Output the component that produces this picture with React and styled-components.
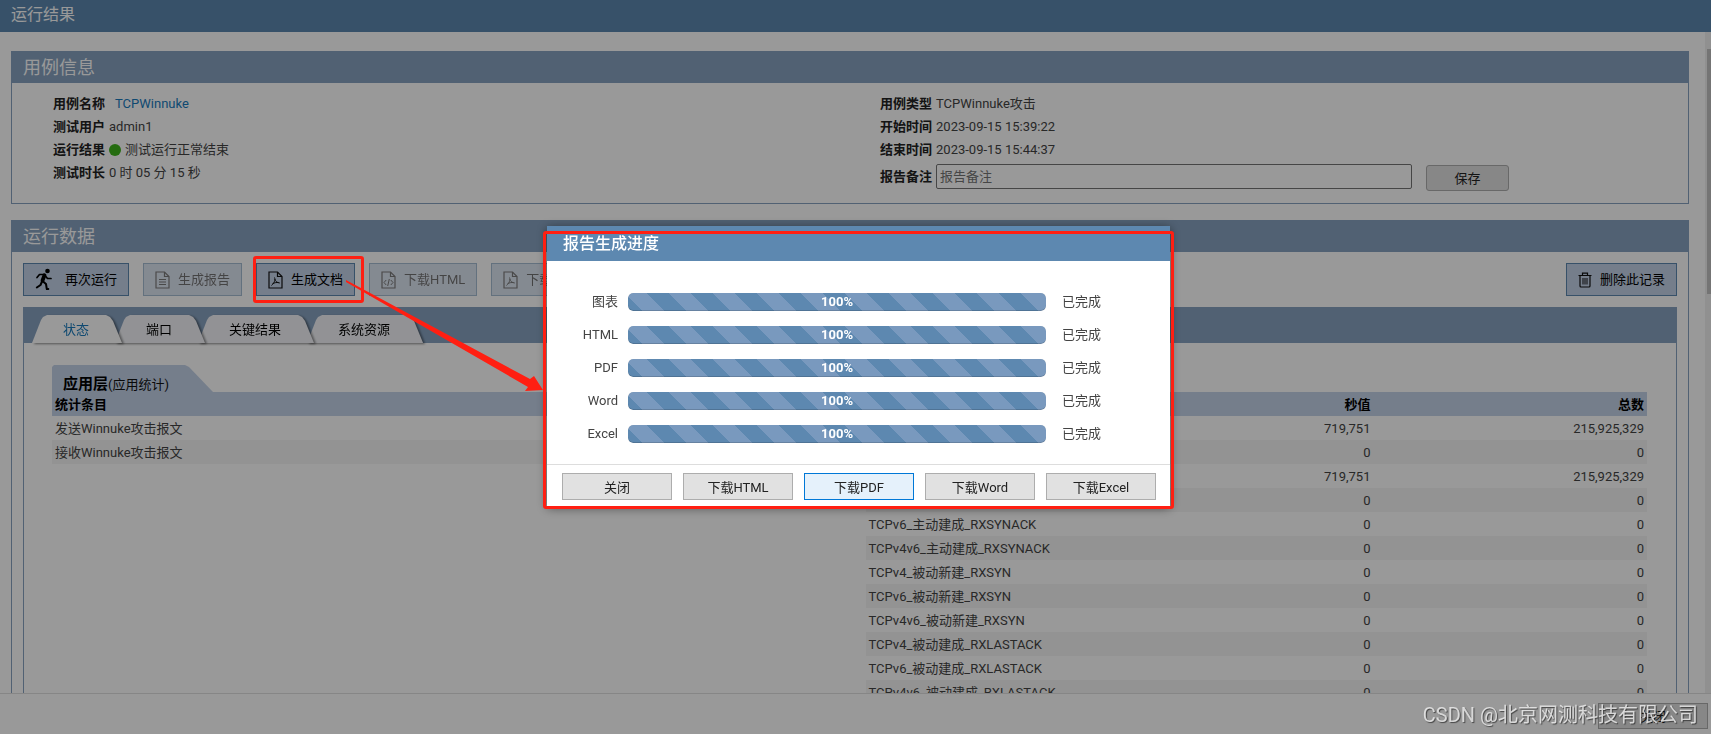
import React from "react";
import styled, { createGlobalStyle } from "styled-components";

const blue = "#5d88b0";
const steel = "#87a2c0";
const pale = "#c3d2e8";
const red = "#ff1f12";

const Global = createGlobalStyle`
  *, *::before, *::after { box-sizing: border-box; }
  body {
    margin: 0;
    background: #fff;
    color: #444;
    font: 13px/24px Roboto, "Noto Sans CJK SC", sans-serif;
  }
  button, input { font: inherit; }
`;

const Page = styled.div`
  height: 100vh;
  display: flex;
  flex-direction: column;
`;

const TitleBar = styled.h1`
  flex: none;
  margin: 0;
  padding: 0 11px;
  background: ${blue};
  color: #fff;
  font-size: 16px;
  font-weight: 400;
  line-height: 30px;
  height: 32px;
`;

const Middle = styled.div`
  flex: 1;
  min-height: 0;
  display: flex;
`;

const Content = styled.main`
  flex: 1;
  min-width: 0;
  overflow: hidden;
  padding: 19px 16px 0 11px;
`;

const ScrollTrack = styled.div`
  flex: none;
  width: 6px;
  padding: 17px 0 0 2px;
  background: #f0f0f0;
`;

const ScrollThumb = styled.div`
  height: 245px;
  background: #c1c1c1;
`;

const Footer = styled.footer`
  flex: none;
  height: 41px;
  padding: 9px 3px 0;
  border-top: 1px solid #e0e0e0;
  display: flex;
  justify-content: flex-end;
`;

const Panel = styled.section`
  border: 1px solid ${steel};
  border-top: 0;
  margin-bottom: 16px;
`;

const PanelTitle = styled.h2`
  height: 32px;
  margin: 0 -1px;
  padding: 0 12px;
  background: ${steel};
  color: #fff;
  font-size: 18px;
  font-weight: 400;
  line-height: 34px;
`;

const InfoGrid = styled.div`
  display: grid;
  grid-template-columns: 1fr 1fr;
  padding: 8px 11px 0;
  height: 120px;
  line-height: 23px;
`;

const InfoColumn = styled.div`
  padding: 1px 0 0 30px;
`;

const InfoRow = styled.div`
  display: flex;
  align-items: center;
  gap: 4px;
  min-height: 23px;
`;

const InfoLabel = styled.label`
  color: #222;
  font-weight: 700;
`;

const CaseLink = styled.a`
  margin-left: 6px;
  color: #1a7bbd;
  text-decoration: none;
`;

const StatusDot = styled.span`
  width: 12px;
  height: 12px;
  border-radius: 50%;
  background: #3fb51c;
`;

const NoteInput = styled.input`
  width: 476px;
  height: 25px;
  padding: 0 3px;
  border: 1px solid #767676;
  border-radius: 2px;
  &::placeholder { color: #757575; opacity: 1; }
`;

const PlainButton = styled.button`
  width: ${(p) => p.$width || 110}px;
  height: ${(p) => p.$height || 27}px;
  flex: none;
  padding: 2px 0 0;
  border: 1px solid ${(p) => (p.$active ? "#0078d7" : "#adadad")};
  border-radius: ${(p) => p.$radius || 0}px;
  background: ${(p) => (p.$active ? "#e5f1fb" : "#e1e1e1")};
  color: #222;
  line-height: 22px;
`;

const SaveButton = styled(PlainButton)`
  margin: 4px 0 0 10px;
`;

const Toolbar = styled.div`
  display: flex;
  gap: 14px;
  padding: 11px;
`;

const ToolButton = styled.button`
  position: relative;
  display: flex;
  align-items: center;
  gap: 8px;
  height: 33px;
  padding: 0 11px;
  border: 1px solid ${blue};
  background: ${pale};
  color: #000;
  white-space: nowrap;
  &:disabled { opacity: 0.55; }
  &:last-child { margin-left: auto; }
  svg { flex: none; }
`;

const ButtonMark = styled.span`
  position: absolute;
  z-index: 20;
  inset: -8px -10px -8px -4px;
  border: 3px solid ${red};
  border-radius: 3px;
`;

const TabFrame = styled.div`
  margin: 0 11px;
  border: 1px solid ${steel};
  border-top: 0;
`;

const TabBar = styled.div`
  display: flex;
  margin: 0 -1px;
  padding: 8px 9px 0;
  height: 36px;
  background: ${steel};
`;

const Tab = styled.button`
  position: relative;
  height: 28px;
  margin-right: -7px;
  padding: 1px 33px 0 31px;
  border: 0;
  background: none;
  color: ${(p) => (p.$active ? "#1a7bbd" : "#000")};
  z-index: ${(p) => p.$level};
  filter: drop-shadow(2px 1px 1px rgba(0, 0, 0, 0.45));
  &::before {
    content: "";
    position: absolute;
    z-index: -1;
    inset: 0;
    background: ${(p) => (p.$active ? "#fff" : "#f3f4f8")};
    clip-path: polygon(
      0 100%, 9px 5px, 11px 2px, 15px 0,
      calc(100% - 16px) 0, calc(100% - 12px) 2px, calc(100% - 9px) 6px, 100% 100%
    );
  }
`;

const Stats = styled.div`
  display: grid;
  grid-template-columns: 1fr 1fr;
  gap: 32px;
  padding: 22px 29px 40px 28px;
`;

const LayerTab = styled.div`
  width: 161px;
  height: 27px;
  padding: 7px 11px 0;
  background: ${pale};
  color: #111;
  line-height: 24px;
  clip-path: polygon(0 2px, 2px 0, 133px 0, 137px 2px, 100% 100%, 0 100%);
  b { font-size: 15px; color: #000; }
`;

const LayerSpace = styled.div`
  height: 27px;
`;

const Table = styled.table`
  width: 100%;
  table-layout: fixed;
  border-collapse: collapse;
  th, td {
    height: 24px;
    padding: 1px 3px 0;
    text-align: right;
    line-height: 23px;
    white-space: nowrap;
  }
  th { background: ${pale}; color: #000; }
  th:first-child, td:first-child { text-align: left; width: 30%; }
  tbody tr:nth-child(even) { background: #f5f5f5; }
`;

const Overlay = styled.div`
  position: fixed;
  inset: 0;
  z-index: 10;
  display: flex;
  align-items: center;
  justify-content: center;
  padding-left: 6px;
  background: rgba(0, 0, 0, 0.4);
`;

const Dialog = styled.div`
  position: relative;
  width: 623px;
  margin-bottom: 2px;
  background: #fff;
  box-shadow: 0 2px 10px rgba(0, 0, 0, 0.5);
`;

const DialogTitle = styled.h2`
  margin: 0;
  padding: 0 16px;
  height: 35px;
  background: ${blue};
  color: #fff;
  font-size: 16px;
  font-weight: 500;
  line-height: 36px;
`;

const DialogBody = styled.div`
  padding: 25px 0 13px;
`;

const DialogFooter = styled.div`
  display: flex;
  justify-content: space-between;
  padding: 8px 14px 6px 15px;
  border-top: 1px solid #ddd;
`;

const ProgressRow = styled.div`
  display: flex;
  align-items: center;
  height: 32px;
  margin-bottom: 1px;
`;

const ProgressLabel = styled.span`
  width: 71px;
  margin-right: 10px;
  text-align: right;
`;

const Track = styled.div`
  width: 418px;
  height: 18px;
  margin-right: 16px;
  border-radius: 5px;
  background: #ddd;
  overflow: hidden;
`;

const Fill = styled.div`
  height: 100%;
  border-radius: 5px;
  color: #fff;
  font-weight: 700;
  line-height: 17px;
  text-align: center;
  background: ${blue} linear-gradient(45deg,
    #7999be 25%, transparent 25%, transparent 50%,
    #7999be 50%, #7999be 75%, transparent 75%) -3px 0 / 44px 44px;
  box-shadow: inset 0 -1px 0 rgba(0, 0, 0, 0.15);
`;

const DialogMark = styled.div`
  position: absolute;
  inset: 5px -4px -3px;
  border: 3px solid ${red};
  border-radius: 3px;
  pointer-events: none;
`;

const Arrow = styled.svg`
  position: absolute;
  top: 50px;
  right: 100%;
  margin-right: 4px;
  overflow: visible;
  pointer-events: none;
`;

const Watermark = styled.div`
  position: fixed;
  z-index: 30;
  right: 13px;
  bottom: 4px;
  color: rgba(235, 235, 235, 0.85);
  font-size: 20px;
  line-height: 30px;
  text-shadow: 1px 1px 1px rgba(0, 0, 0, 0.55);
  pointer-events: none;
`;

function RunIcon() {
  return (
    <svg width="22" height="23" viewBox="0 0 22 23" fill="none" stroke="#000" strokeLinecap="round" strokeLinejoin="round" aria-hidden="true">
      <circle cx="12.500" cy="3" r="2.300" fill="#000" stroke="none" />
      <path d="M9.500 7.300L7.500 12.500" strokeWidth="3.800" />
      <path d="M9 6.500L4.500 6.500 2 9.500M10 7.500l2.500 3 3.500 0" strokeWidth="1.700" />
      <path d="M7.500 13l3.500 3 .8 5h1.500M7 13.500L5.500 17 1.800 19.500" strokeWidth="2" />
    </svg>
  );
}

function DocIcon({ kind }) {
  return (
    <svg width="15" height="18" viewBox="0 0 15 18" fill="none" stroke="#111" strokeWidth="1.200" aria-hidden="true">
      <path d="M1 1h8.500L14 5.500V17H1z" />
      <path d="M9.500 1v4.500H14" />
      {kind === "text" && <path d="M4 8.500h7M4 11h7M4 13.500h7" />}
      {kind === "pdf" && <path d="M6.500 6.500c1 2.500 0 5-3 8M6.800 8c.6 2.200 2 3.600 5 4M4.500 12.800c2-1.200 4-1.500 6-1.200" strokeWidth="1" />}
      {kind === "html" && <path d="M5.200 9L3 11.500l2.200 2.500M9.800 9l2.200 2.500L9.800 14M8.300 8l-1.600 7" strokeWidth="1" />}
    </svg>
  );
}

function TrashIcon() {
  return (
    <svg width="14" height="16" viewBox="0 0 14 16" fill="none" stroke="#111" strokeWidth="1.200" aria-hidden="true">
      <path d="M.5 3.500h13M4.500 3V1.200h5V3M2 3.500V14q0 1 1 1h8q1 0 1-1V3.500" />
      <path d="M5 6v6.500M7 6v6.500M9 6v6.500" strokeWidth="1" />
    </svg>
  );
}

const tabs = ["状态", "端口", "关键结果", "系统资源"];

const rightRows = [
  ["", "719,751", "215,925,329"],
  ["", "0", "0"],
  ["", "719,751", "215,925,329"],
  ["", "0", "0"],
  ["TCPv6_主动建成_RXSYNACK", "0", "0"],
  ["TCPv4v6_主动建成_RXSYNACK", "0", "0"],
  ["TCPv4_被动新建_RXSYN", "0", "0"],
  ["TCPv6_被动新建_RXSYN", "0", "0"],
  ["TCPv4v6_被动新建_RXSYN", "0", "0"],
  ["TCPv4_被动建成_RXLASTACK", "0", "0"],
  ["TCPv6_被动建成_RXLASTACK", "0", "0"],
  ["TCPv4v6_被动建成_RXLASTACK", "0", "0"],
];

const progress = ["图表", "HTML", "PDF", "Word", "Excel"];

function Info({ label, children }) {
  return (
    <InfoRow>
      <InfoLabel as="span">{label}</InfoLabel>
      {children}
    </InfoRow>
  );
}

export default function App() {
  return (
    <>
      <Global />
      <Page>
        <TitleBar>运行结果</TitleBar>
        <Middle>
          <Content>
            <Panel>
              <PanelTitle>用例信息</PanelTitle>
              <InfoGrid>
                <InfoColumn>
                  <Info label="用例名称"><CaseLink href="#case">TCPWinnuke</CaseLink></Info>
                  <Info label="测试用户"><span>admin1</span></Info>
                  <Info label="运行结果"><StatusDot /><span>测试运行正常结束</span></Info>
                  <Info label="测试时长"><span>0 时 05 分 15 秒</span></Info>
                </InfoColumn>
                <InfoColumn>
                  <Info label="用例类型"><span>TCPWinnuke攻击</span></Info>
                  <Info label="开始时间"><span>2023-09-15 15:39:22</span></Info>
                  <Info label="结束时间"><span>2023-09-15 15:44:37</span></Info>
                  <InfoRow>
                    <InfoLabel htmlFor="note">报告备注</InfoLabel>
                    <NoteInput id="note" placeholder="报告备注" />
                    <SaveButton $width={83} $height={26} $radius={3}>保存</SaveButton>
                  </InfoRow>
                </InfoColumn>
              </InfoGrid>
            </Panel>
            <Panel>
              <PanelTitle>运行数据</PanelTitle>
              <Toolbar>
                <ToolButton><RunIcon />再次运行</ToolButton>
                <ToolButton disabled><DocIcon kind="text" />生成报告</ToolButton>
                <ToolButton><DocIcon kind="pdf" />生成文档<ButtonMark /></ToolButton>
                <ToolButton disabled><DocIcon kind="html" />下载HTML</ToolButton>
                <ToolButton disabled><DocIcon kind="pdf" />下载PDF</ToolButton>
                <ToolButton><TrashIcon />删除此记录</ToolButton>
              </Toolbar>
              <TabFrame>
                <TabBar>
                  {tabs.map((t, i) => (
                    <Tab key={t} $active={i === 0} $level={4 - i}>{t}</Tab>
                  ))}
                </TabBar>
                <Stats>
                  <div>
                    <LayerTab><b>应用层</b>(应用统计)</LayerTab>
                    <Table>
                      <thead><tr><th>统计条目</th></tr></thead>
                      <tbody>
                        <tr><td>发送Winnuke攻击报文</td></tr>
                        <tr><td>接收Winnuke攻击报文</td></tr>
                      </tbody>
                    </Table>
                  </div>
                  <div>
                    <LayerSpace />
                    <Table>
                      <thead><tr><th /><th>秒值</th><th>总数</th></tr></thead>
                      <tbody>
                        {rightRows.map((r, i) => (
                          <tr key={i}>{r.map((c, j) => <td key={j}>{c}</td>)}</tr>
                        ))}
                      </tbody>
                    </Table>
                  </div>
                </Stats>
              </TabFrame>
            </Panel>
          </Content>
          <ScrollTrack aria-hidden="true"><ScrollThumb /></ScrollTrack>
        </Middle>
        <Footer><PlainButton $height={26}>关闭</PlainButton></Footer>
      </Page>
      <Overlay>
        <Dialog role="dialog" aria-labelledby="progress-title">
          <DialogTitle id="progress-title">报告生成进度</DialogTitle>
          <DialogBody>
            {progress.map((p) => (
              <ProgressRow key={p}>
                <ProgressLabel>{p}</ProgressLabel>
                <Track role="progressbar" aria-valuenow={100} aria-label={p}>
                  <Fill style={{ width: "100%" }}>100%</Fill>
                </Track>
                <span>已完成</span>
              </ProgressRow>
            ))}
          </DialogBody>
          <DialogFooter>
            <PlainButton>关闭</PlainButton>
            <PlainButton>下载HTML</PlainButton>
            <PlainButton $active>下载PDF</PlainButton>
            <PlainButton>下载Word</PlainButton>
            <PlainButton>下载Excel</PlainButton>
          </DialogFooter>
          <DialogMark />
          <Arrow width="197" height="115" viewBox="0 0 197 115" aria-hidden="true">
            <path d="M0 4L184 103L188 100L197 114L179 115L182 111L0 6z" fill={red} />
          </Arrow>
        </Dialog>
      </Overlay>
      <Watermark>CSDN @北京网测科技有限公司</Watermark>
    </>
  );
}
